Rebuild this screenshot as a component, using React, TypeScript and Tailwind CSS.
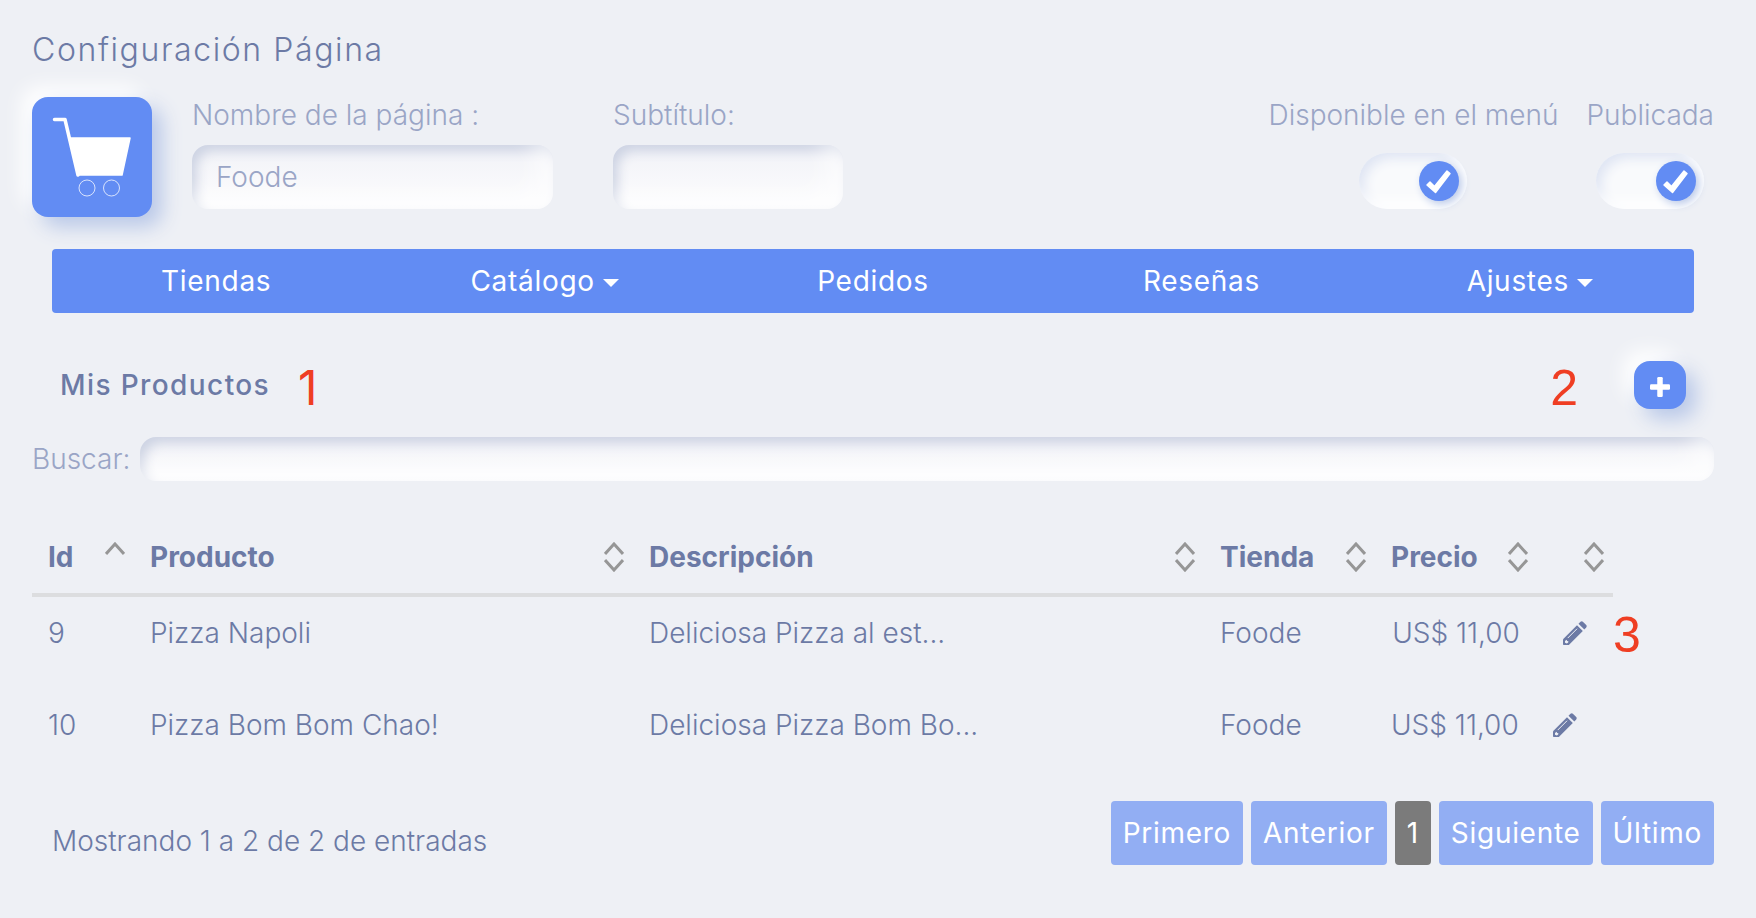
import React, { useState } from "react";

interface Product {
  id: number;
  name: string;
  description: string;
  store: string;
  price: string;
}

const products: Product[] = [
  { id: 9, name: "Pizza Napoli", description: "Deliciosa Pizza al est...", store: "Foode", price: "US$ 11,00" },
  { id: 10, name: "Pizza Bom Bom Chao!", description: "Deliciosa Pizza Bom Bo...", store: "Foode", price: "US$ 11,00" },
];

const menu = [
  { label: "Tiendas", dropdown: false },
  { label: "Catálogo", dropdown: true },
  { label: "Pedidos", dropdown: false },
  { label: "Reseñas", dropdown: false },
  { label: "Ajustes", dropdown: true },
];

const columns = [
  { label: "Id", width: "w-[102px]" },
  { label: "Producto", width: "w-[499px]" },
  { label: "Descripción", width: "" },
  { label: "Tienda", width: "w-[171px]" },
  { label: "Precio", width: "w-[162px]" },
  { label: "", width: "w-[76px]" },
];

const inputClass =
  "rounded-2xl bg-linear-to-b from-[#f1f2f7] to-[#fdfdfe] font-light text-[#9aa5c6] outline-none shadow-[inset_-20px_-16px_20px_#ffffff80,inset_5px_6px_12px_#cdd3e3]";

function CartLogo() {
  return (
    <div className="size-[120px] shrink-0 rounded-2xl bg-[#628cf3] shadow-[10px_10px_20px_#b9c8e8,-10px_-10px_20px_#ffffff]">
      <svg viewBox="0 0 120 120" className="size-full" aria-hidden="true">
        <path d="M22.5 22.5H33L46 78" fill="none" stroke="#fff" strokeWidth="3.5" strokeLinecap="round" strokeLinejoin="round" />
        <path d="M38 41H98L90 78H46Z" fill="#fff" stroke="#fff" strokeWidth="1.5" strokeLinejoin="round" />
        <circle cx="55" cy="91" r="8" fill="none" stroke="#fff" strokeOpacity="0.75" />
        <circle cx="79.5" cy="91" r="8" fill="none" stroke="#fff" strokeOpacity="0.75" />
      </svg>
    </div>
  );
}

function Toggle({ id, label }: { id: string; label: string }) {
  const [checked, setChecked] = useState(true);

  return (
    <div className="flex flex-col items-center gap-5">
      <label htmlFor={id} className="font-light leading-9 text-[#9aa5c6]">{label}</label>
      <div className="relative h-14 w-[108px]">
        <input
          id={id}
          type="checkbox"
          checked={checked}
          onChange={(e) => setChecked(e.target.checked)}
          className="peer block size-full appearance-none rounded-full bg-[#f9fafc] shadow-[inset_-10px_-10px_12px_#ffffffcc,inset_5px_5px_12px_#dfe5f3]"
        />
        <span className="pointer-events-none absolute top-2 left-2 size-10 rounded-full bg-[#628cf3] text-white shadow-[3px_3px_8px_#b9c8e8] peer-checked:right-2 peer-checked:left-auto">
          <svg viewBox="0 0 40 40" className="size-full" aria-hidden="true">
            <path
              d="M8 24L11 21L15.5 25.5L28 10L31 12.5L16.5 31.5Z"
              fill="currentColor"
              stroke="currentColor"
              strokeWidth="1.5"
              strokeLinejoin="round"
            />
          </svg>
        </span>
      </div>
    </div>
  );
}

function SortIcon({ ascending }: { ascending: boolean }) {
  return (
    <svg viewBox="0 0 20 30" className="h-[30px] w-5" fill="none" stroke="#969696" strokeWidth="3" aria-hidden="true">
      <path d="M1 12L10 2L19 12" />
      {!ascending && <path d="M1 18L10 28L19 18" />}
    </svg>
  );
}

function PencilIcon() {
  return (
    <svg viewBox="0 0 24 24" className="size-6" fill="currentColor" aria-hidden="true">
      <path d="M0 23.2V18.2L14 4.2L19.8 10L5.8 24H0.800A.8.8 0 0 1 0 23.200Z" />
      <path d="M15.5 2.7L17.5 .8Q18.700 -.2 19.900 .8L23.200 4.100Q24.200 5.300 23.200 6.500L21.300 8.500Z" />
      <path d="M5 16.800L13.800 8" stroke="#eef0f5" strokeWidth="1" strokeLinecap="round" />
      <path d="M2 20L3.500 18.700L4.200 20L5.400 20.300L5.200 21.500L3.900 22.400L2 21.800Z" fill="#eef0f5" />
    </svg>
  );
}

function Marker({ children, className = "font-['Liberation_Sans',sans-serif] text-[50px]" }: { children: React.ReactNode; className?: string }) {
  return <span className={`block pt-1.5 leading-12 text-[#ef3e23] ${className}`}>{children}</span>;
}

function PageButton({ label }: { label: string }) {
  return (
    <button type="button" className="h-16 rounded-sm bg-[#92aef3] px-3 font-normal tracking-wide text-white">
      {label}
    </button>
  );
}

export default function App() {
  const [name, setName] = useState("Foode");
  const [subtitle, setSubtitle] = useState("");
  const [search, setSearch] = useState("");

  return (
    <main className="min-h-screen bg-[#eef0f5] pt-[29px] pr-[42px] pb-12 pl-8 font-[Inter,sans-serif] text-[28px] font-light text-[#6c7aa5]">
      <h1 className="text-[32px] leading-[42px] tracking-wider">Configuración Página</h1>

      <section className="mt-[26px] flex items-start">
        <CartLogo />
        <div className="ml-10 flex flex-col gap-3">
          <label htmlFor="page-name" className="leading-9 text-[#9aa5c6]">Nombre de la página :</label>
          <input
            id="page-name"
            value={name}
            onChange={(e) => setName(e.target.value)}
            className={`h-16 w-[361px] px-6 ${inputClass}`}
          />
        </div>
        <div className="ml-[60px] flex flex-col gap-3">
          <label htmlFor="page-subtitle" className="leading-9 text-[#9aa5c6]">Subtítulo:</label>
          <input
            id="page-subtitle"
            value={subtitle}
            onChange={(e) => setSubtitle(e.target.value)}
            className={`h-16 w-[230px] px-6 ${inputClass}`}
          />
        </div>
        <div className="ml-auto flex gap-7">
          <Toggle id="in-menu" label="Disponible en el menú" />
          <Toggle id="published" label="Publicada" />
        </div>
      </section>

      <nav className="mt-8 mr-5 ml-5 grid h-16 grid-cols-5 rounded-sm bg-[#628cf3] text-white">
        {menu.map((item) => (
          <a key={item.label} href="#" className="flex items-center justify-center gap-2 font-normal tracking-wide">
            {item.label}
            {item.dropdown && (
              <svg viewBox="0 0 16 8" className="mt-1 h-2 w-4" aria-hidden="true">
                <path d="M0 0H16L8 8Z" fill="currentColor" />
              </svg>
            )}
          </a>
        ))}
      </nav>

      <section className="mt-12 mr-7 ml-7 flex h-12 items-center">
        <h2 className="font-medium tracking-wider">Mis Productos</h2>
        <div className="ml-7">
          <Marker className="font-[Inter,sans-serif] text-5xl font-normal">1</Marker>
        </div>
        <div className="mr-14 ml-auto">
          <Marker>2</Marker>
        </div>
        <button
          type="button"
          aria-label="Agregar producto"
          className="flex h-12 w-[52px] items-center justify-center rounded-2xl bg-[#628cf3] text-white shadow-[10px_10px_20px_#b9c8e8,-10px_-10px_20px_#ffffff]"
        >
          <svg viewBox="0 0 20 20" className="mt-1 size-5" fill="currentColor" aria-hidden="true">
            <rect x="7.25" width="5.5" height="20" rx="1.25" />
            <rect y="7.25" width="20" height="5.5" rx="1.25" />
          </svg>
        </button>
      </section>

      <div className="mt-7 flex items-center gap-2.5">
        <label htmlFor="search" className="leading-9 text-[#9aa5c6]">Buscar:</label>
        <input
          id="search"
          value={search}
          onChange={(e) => setSearch(e.target.value)}
          className={`h-11 min-w-0 flex-1 px-4 ${inputClass}`}
        />
      </div>

      <div className="mt-10 pr-[101px]">
        <table className="w-full table-fixed border-separate border-spacing-0 text-left">
          <thead>
            <tr>
              {columns.map((column, idx) => (
                <th key={idx} scope="col" className={`h-19 border-b-4 border-[#dcdddf] pr-[9px] pl-4 font-bold ${column.width}`}>
                  <button type="button" aria-label={column.label || "Acciones"} className="flex w-full items-center justify-between">
                    <span>{column.label}</span>
                    <SortIcon ascending={idx === 0} />
                  </button>
                </th>
              ))}
            </tr>
          </thead>
          <tbody className="leading-9">
            {products.map((product, idx) => (
              <tr key={product.id} className="h-23 align-top">
                <td className="px-4 pt-[18px]">{product.id}</td>
                <td className="px-4 pt-[18px]">{product.name}</td>
                <td className="px-4 pt-[18px]">{product.description}</td>
                <td className="px-4 pt-[18px]">{product.store}</td>
                <td className={`px-4 pt-[18px] whitespace-nowrap ${idx === 0 ? "text-center" : ""}`}>{product.price}</td>
                <td className="relative px-4 pt-[18px]">
                  <a href="#" aria-label="Editar" className={`flex h-9 items-center ${idx === 0 ? "justify-center" : ""}`}>
                    <PencilIcon />
                  </a>
                  {idx === 0 && (
                    <div className="absolute top-2 left-full">
                      <Marker>3</Marker>
                    </div>
                  )}
                </td>
              </tr>
            ))}
          </tbody>
        </table>
      </div>

      <footer className="mt-5 flex items-center justify-between">
        <p className="pt-4 pl-5 leading-9">Mostrando 1 a 2 de 2 de entradas</p>
        <div className="flex gap-2">
          <PageButton label="Primero" />
          <PageButton label="Anterior" />
          <button type="button" aria-current="page" className="h-16 rounded-sm bg-[#7b7b7b] px-3 font-normal tracking-wide text-white">
            1
          </button>
          <PageButton label="Siguiente" />
          <PageButton label="Último" />
        </div>
      </footer>
    </main>
  );
}
